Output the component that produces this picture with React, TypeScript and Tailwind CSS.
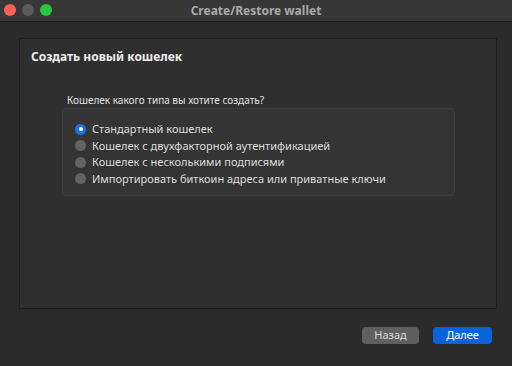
import { useState } from "react";

const options = [
  "Стандартный кошелек",
  "Кошелек с двухфакторной аутентификацией",
  "Кошелек с несколькими подписями",
  "Импортировать биткоин адреса или приватные ключи",
];

const App = () => {
  const [selected, setSelected] = useState(0);

  return (
    <div
      className="w-[512px] h-[366px] bg-[#2b2b2b] flex flex-col overflow-hidden"
      style={{ fontFamily: '"Noto Sans", "Liberation Sans", sans-serif' }}
    >
      {/* title bar */}
      <div className="relative h-[22px] shrink-0 bg-[#373737] border-b border-[#1c1c1c] flex items-center justify-center">
        <div className="absolute left-[4px] top-[4px] flex gap-[6px]">
          <span className="w-[12px] h-[12px] rounded-full bg-[#fe5f57]" />
          <span className="w-[12px] h-[12px] rounded-full bg-[#5a5a5a]" />
          <span className="w-[12px] h-[12px] rounded-full bg-[#28c840]" />
        </div>
        <span className="text-[12px] font-bold text-[#a9a9a9]">Create/Restore wallet</span>
      </div>

      <div className="flex-1 flex flex-col pl-[19px] pr-[15px] pt-[16px] pb-[22px]">
        <div className="h-[271px] bg-[#2f2f2f] border border-[#1f1f1f] flex flex-col">
          <h2 className="mt-[9px] ml-[11px] text-[12px] font-bold text-[#ececec]">
            Создать новый кошелек
          </h2>

          <div className="mt-[27px] ml-[42px] w-[393px]">
            <p className="ml-[5px] text-[10px] leading-[14px] text-[#e2e2e2]">
              Кошелек какого типа вы хотите создать?
            </p>
            <div className="mt-[1px] h-[88px] rounded-[4px] bg-[#343434] border border-[#3d3d3d] pl-[12px] pt-[12px] flex flex-col">
              {options.map((label, i) => (
                <label
                  key={label}
                  onClick={() => setSelected(i)}
                  className="h-[16.5px] flex items-center gap-[6px] cursor-pointer"
                >
                  {selected === i ? (
                    <span className="w-[11px] h-[11px] rounded-full bg-[#1a73e8] flex items-center justify-center">
                      <span className="w-[4px] h-[4px] rounded-full bg-white" />
                    </span>
                  ) : (
                    <span className="w-[11px] h-[11px] rounded-full bg-[#636363]" />
                  )}
                  <span className="text-[11px] text-[#dedede]">{label}</span>
                </label>
              ))}
            </div>
          </div>
        </div>

        <div className="mt-auto flex justify-end gap-[14px] pr-[5px]">
          <button className="w-[57px] h-[17px] rounded-[4px] bg-[#5f5f5f] text-[11px] text-[#dcdcdc] flex items-center justify-center">
            Назад
          </button>
          <button className="w-[59px] h-[17px] rounded-[4px] bg-[#0b63d9] text-[11px] text-white flex items-center justify-center">
            Далее
          </button>
        </div>
      </div>
    </div>
  );
};

export default App;
